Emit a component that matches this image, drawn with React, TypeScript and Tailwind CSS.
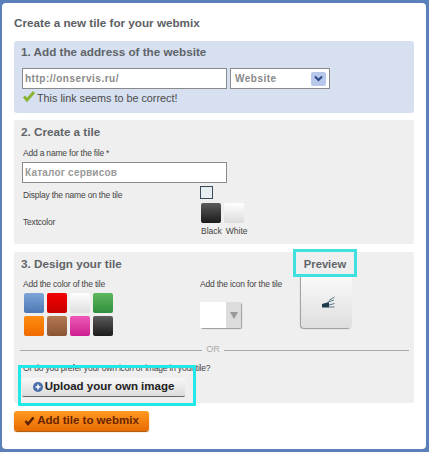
const sans = "font-['Liberation_Sans',Arial,sans-serif]";

const swatches = [
  "from-[#7fa6d8] to-[#4a78b4]",
  "from-[#f40000] to-[#c80000]",
  "from-[#ffffff] to-[#dedede]",
  "from-[#5cb85c] to-[#2f8f3f]",
  "from-[#ff8c10] to-[#f06a00]",
  "from-[#b57a52] to-[#8a5434]",
  "from-[#ee58b8] to-[#cc1c90]",
  "from-[#5c5c5c] to-[#1c1c1c]",
];

function Heading({ children }: { children: React.ReactNode }) {
  return <h2 className="text-[11.7px] leading-[15px] font-bold text-[#5f6468]">{children}</h2>;
}

function Label({ children, className = "" }: { children: React.ReactNode; className?: string }) {
  return <div className={`text-[8.5px] leading-[12px] text-[#444] tracking-[-0.2px] ${className}`}>{children}</div>;
}

export default function App() {
  return (
    <div className={`${sans} w-[429px] h-[452px] bg-[#5b7fb8] pl-[2px] pr-[3px] pt-[3px] pb-[3px] overflow-hidden`}>
      <div className="relative h-[446px] bg-white rounded-[4px] pl-[12px] pr-[12px]">
        <h1 className="pt-[13px] h-[38px] text-[11.7px] leading-[14px] font-bold text-[#5c6064]">
          Create a new tile for your webmix
        </h1>

        {/* step 1 */}
        <section className="h-[72px] bg-[#d6e0f0] rounded-[3px] pl-[7px] pt-[3px]">
          <Heading>1. Add the address of the website</Heading>
          <div className="flex gap-[3px] mt-[9px] ml-[1px]">
            <div className="w-[205px] h-[21px] bg-white border border-[#8a8a8a] pl-[2px] text-[10px] leading-[19px] font-bold text-[#8a8a8a] tracking-[0.5px]">
              http://onservis.ru/
            </div>
            <div className="w-[100px] h-[21px] bg-white border border-[#8a8a8a] pl-[4px] pr-[3px] flex items-center justify-between text-[10px] font-bold text-[#8a8a8a] tracking-[0.5px]">
              Website
              <span className="w-[15px] h-[14px] bg-[#b8c8ea] rounded-[2px] flex items-center justify-center">
                <svg width="9" height="7" viewBox="0 0 9 7">
                  <path d="M1 1.5 L4.5 5 L8 1.5" fill="none" stroke="#2a4a8a" strokeWidth="2" />
                </svg>
              </span>
            </div>
          </div>
          <div className="flex items-start ml-[1px] mt-[1px] text-[10.8px] leading-[14px] text-[#4a4a4a]">
            <svg width="14" height="13" viewBox="0 0 14 13" className="mr-[1px]">
              <path d="M2 6.5 L5 10 L12 2" fill="none" stroke="#8ab432" strokeWidth="3" />
            </svg>
            <span className="mt-[1px]">This link seems to be correct!</span>
          </div>
        </section>

        {/* step 2 */}
        <section className="h-[124px] mt-[7px] bg-[#efefef] rounded-[2px] pl-[7px] pt-[4px]">
          <Heading>2. Create a tile</Heading>
          <Label className="mt-[8px] ml-[2px]">Add a name for the file *</Label>
          <div className="w-[205px] h-[21px] mt-[3px] ml-[1px] bg-white border border-[#8a8a8a] pl-[2px] text-[10px] leading-[20px] font-bold text-[#999] tracking-[0.2px]">
            Каталог сервисов
          </div>
          <div className="grid grid-cols-[177px_auto] ml-[2px] mt-[2px]">
            <Label className="mt-[4px]">Display the name on the tile</Label>
            <div className="w-[13px] h-[13px] mt-[1px] border border-[#3a4a5a] bg-[#e8eef0]" />
            <Label className="self-center mt-[6px]">Textcolor</Label>
            <div className="mt-[2px]">
              <div className="flex gap-[3px] ml-[1px]">
                <div className="w-[20px] h-[20px] rounded-[2px] bg-gradient-to-b from-[#5c5c5c] to-[#1c1c1c]" />
                <div className="w-[20px] h-[20px] rounded-[2px] bg-gradient-to-b from-white to-[#dcdcdc]" />
              </div>
              <div className="flex gap-[4px] mt-[2px] ml-[1px] text-[8.5px] leading-[12px] text-[#444]">
                <span>Black</span>
                <span>White</span>
              </div>
            </div>
          </div>
        </section>

        {/* step 3 */}
        <section className="h-[151px] mt-[8px] bg-[#efefef] rounded-[2px] pl-[7px] pt-[4px]">
          <Heading>3. Design your tile</Heading>
          <div className="flex mt-[7px] ml-[2px] h-[67px]">
            <div className="w-[177px]">
              <Label>Add the color of the tile</Label>
              <div className="grid grid-cols-[20px_20px_20px_20px] gap-x-[3px] gap-y-[3px] mt-[3px] ml-[1px]">
                {swatches.map((c) => (
                  <div key={c} className={`h-[20px] rounded-[2px] bg-gradient-to-b ${c}`} />
                ))}
              </div>
            </div>
            <div className="w-[101px]">
              <Label>Add the icon for the tile</Label>
              <div className="flex w-[41px] h-[26px] mt-[12px] rounded-[2px] shadow-[1px_1px_1px_#999]">
                <div className="w-[26px] bg-white" />
                <div className="flex-1 bg-[#dcdcdc] flex items-center justify-center">
                  <div className="w-0 h-0 border-l-[4px] border-r-[4px] border-t-[7px] border-l-transparent border-r-transparent border-t-[#999]" />
                </div>
              </div>
            </div>
            <div className="w-[51px] h-[52px] -mt-[2px] rounded-b-[4px] bg-gradient-to-b from-[#fafafa] to-[#dedede] shadow-[-1px_1px_1px_#999] flex items-center justify-center">
              <svg width="13" height="12" viewBox="0 0 13 12" className="ml-[3px]">
                <path d="M0 11.5 V8 L7 6 V11.5 Z" fill="#1f3a4a" />
                <path d="M7 11 H12.5 M7 9 L12.5 7.5 M5 6.5 L12 4 M7 4.5 L12.5 1" stroke="#5a7a8a" strokeWidth="1" fill="none" />
              </svg>
            </div>
          </div>
          <div className="flex items-center pr-[5px] -ml-[1px] h-[10px]">
            <div className="w-[182px] h-px bg-[#a8a8a8]" />
            <span className="w-[22px] text-center text-[9px] text-[#aaa]">OR</span>
            <div className="flex-1 h-px bg-[#a8a8a8]" />
          </div>
          <Label className="mt-[7px] ml-[2px]">Or do you prefer your own icon or image in your tile?</Label>
          <button className="flex items-center justify-center w-[163px] h-[19px] mt-[4px] ml-[1px] rounded-[2px] bg-gradient-to-b from-[#f8f8f8] to-[#dcdcdc] border-b border-[#666] text-[11.5px] font-bold text-[#222]">
            <svg width="10" height="10" viewBox="0 0 10 10" className="mr-[2px]">
              <circle cx="5" cy="5" r="5" fill="#4a6ea8" />
              <path d="M5 2.5 V7.5 M2.5 5 H7.5" stroke="white" strokeWidth="1.5" />
            </svg>
            Upload your own image
          </button>
        </section>

        <button className="flex items-center justify-center w-[135px] h-[20px] mt-[8px] rounded-[3px] bg-gradient-to-b from-[#ff9a20] to-[#e86a00] shadow-[0_1px_1px_#a85000] text-[11.5px] font-bold text-[#6a2400]">
          <svg width="11" height="10" viewBox="0 0 11 10" className="mr-[2px]">
            <path d="M1.5 5 L4 8 L9.5 1.5" fill="none" stroke="#5a2000" strokeWidth="2.5" />
          </svg>
          Add tile to webmix
        </button>

        {/* highlight boxes drawn over the form */}
        <div className="absolute left-[291px] top-[246px] w-[64px] h-[28px] border-[3px] border-[#3fe0e0] bg-[#efefef] pt-[2px] flex items-center justify-center text-[11.2px] font-bold text-[#5f6468]">
          Preview
        </div>
        <div className="absolute left-[16px] top-[362px] w-[178px] h-[41px] border-[3px] border-[#20e8e8]" />
      </div>
    </div>
  );
}
